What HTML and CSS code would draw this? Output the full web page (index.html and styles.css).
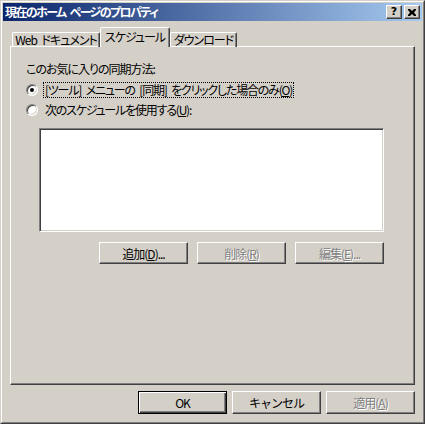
FILE: index.html
```html
<!DOCTYPE html>
<html lang="ja">
    <head>
        <meta charset="UTF-8" />
        <title>現在のホーム ページのプロパティ</title>
        <link rel="stylesheet" href="styles.css">
    </head>
    <body>
        <div class="window">
            <div class="frame">
                <div class="titlebar">
                    <span class="title">現在のホーム ページのプロパティ</span>
                    <div class="caption-buttons">
                        <button class="cap-btn help">?</button>
                        <button class="cap-btn close">
                            <svg width="8" height="7" viewBox="0 0 8 7">
                                <path d="M0 0h2l2 2 2-2h2v1l-2 2.5 2 2.5v1h-2l-2-2-2 2h-2v-1l2-2.5-2-2.5z" fill="#000"/>
                            </svg>
                        </button>
                    </div>
                </div>

                <div class="content">
                    <div class="tabs">
                        <div class="tab tab-web">Web ドキュメント</div>
                        <div class="tab tab-active">スケジュール</div>
                        <div class="tab tab-dl">ダウンロード</div>
                    </div>

                    <div class="panel">
                        <p class="label">このお気に入りの同期方法:</p>
                        <label class="radio-row">
                            <span class="radio checked"></span>
                            <span class="radio-text focus">[ツール] メニューの [同期] をクリックした場合のみ(<u>O</u>)</span>
                        </label>
                        <label class="radio-row">
                            <span class="radio"></span>
                            <span class="radio-text">次のスケジュールを使用する(<u>U</u>):</span>
                        </label>

                        <div class="schedule">
                            <div class="listbox"></div>
                            <div class="list-buttons">
                                <button class="button">追加(<u>D</u>)...</button>
                                <button class="button disabled">削除(<u>R</u>)</button>
                                <button class="button disabled">編集(<u>E</u>)...</button>
                            </div>
                        </div>
                    </div>

                    <div class="dialog-buttons">
                        <button class="button default">OK</button>
                        <button class="button">キャンセル</button>
                        <button class="button disabled">適用(<u>A</u>)</button>
                    </div>
                </div>
            </div>
        </div>
    </body>
</html>
```

FILE: styles.css
```css
body {
    margin: 0;
    background-color: #d4d0c8;
    font-family: "Noto Sans CJK JP", "DejaVu Sans", sans-serif;
    font-size: 12px;
    font-feature-settings: "palt";
    letter-spacing: -1px;
    word-spacing: 3px;
    color: #000;
}
.window {
    width: 425px;
    height: 424px;
    box-sizing: border-box;
    border: 1px solid;
    border-color: #d4d0c8 #404040 #404040 #d4d0c8;
}
.frame {
    height: 100%;
    box-sizing: border-box;
    border: 1px solid;
    border-color: #ffffff #808080 #808080 #ffffff;
    padding: 1px;
    display: flex;
    flex-direction: column;
}
.titlebar {
    height: 18px;
    display: flex;
    align-items: center;
    justify-content: space-between;
    padding: 0 2px 0 2px;
    background: linear-gradient(to right, #0a246a, #a6caf0);
}
.title {
    color: #ffffff;
    font-weight: bold;
    line-height: 18px;
    letter-spacing: -1.6px;
}
.caption-buttons {
    display: flex;
    gap: 2px;
}
.cap-btn {
    width: 16px;
    height: 14px;
    padding: 0;
    box-sizing: border-box;
    background-color: #d4d0c8;
    border: 1px solid;
    border-color: #ffffff #404040 #404040 #ffffff;
    box-shadow: inset -1px -1px 0 #808080;
    display: flex;
    align-items: center;
    justify-content: center;
    font-family: "DejaVu Sans", sans-serif;
    font-weight: bold;
    font-size: 11px;
    line-height: 12px;
    letter-spacing: 0;
}
.content {
    flex: 1;
    display: flex;
    flex-direction: column;
    padding: 7px 7px 7px 7px;
}
.tabs {
    display: flex;
    align-items: flex-end;
    height: 19px;
    padding-left: 2px;
    position: relative;
    z-index: 1;
    margin-bottom: -1px;
}
.tab {
    height: 15px;
    box-sizing: border-box;
    border: 1px solid;
    border-bottom: none;
    border-color: #ffffff #404040 transparent #ffffff;
    border-radius: 2px 2px 0 0;
    box-shadow: inset -1px 0 0 #808080;
    text-align: center;
    line-height: 14px;
    white-space: nowrap;
}
.tab-web {
    width: 88px;
}
.tab-active {
    width: 70px;
    height: 20px;
    background-color: #d4d0c8;
    line-height: 17px;
}
.tab-dl {
    width: 67px;
}
.panel {
    height: 339px;
    box-sizing: border-box;
    border: 1px solid;
    border-color: #ffffff #404040 #404040 #ffffff;
    box-shadow: inset -1px -1px 0 #808080;
    padding: 14px 15px 0 15px;
}
.label {
    margin: 0;
    line-height: 15px;
}
.radio-row {
    display: flex;
    align-items: center;
    height: 20px;
    gap: 5px;
}
.radio-row:first-of-type {
    margin-top: 4px;
}
.radio {
    width: 12px;
    height: 12px;
    box-sizing: border-box;
    border-radius: 50%;
    border: 1px solid;
    border-color: #808080 #ffffff #ffffff #808080;
    box-shadow: inset 1px 1px 0 #404040, inset -1px -1px 0 #d4d0c8;
    background-color: #ffffff;
    display: flex;
    align-items: center;
    justify-content: center;
}
.radio.checked::after {
    content: "";
    width: 4px;
    height: 4px;
    border-radius: 50%;
    background-color: #000;
}
.radio-text {
    line-height: 14px;
    padding: 0 1px;
    border: 1px dotted transparent;
    letter-spacing: -1.2px;
}
.radio-text.focus {
    border-color: #000;
}
.schedule {
    width: 345px;
    margin: 8px 0 0 13px;
}
.listbox {
    height: 104px;
    box-sizing: border-box;
    border: 1px solid;
    border-color: #808080 #ffffff #ffffff #808080;
    box-shadow: inset 1px 1px 0 #404040, inset -1px -1px 0 #d4d0c8;
    background-color: #ffffff;
}
.list-buttons {
    display: flex;
    justify-content: flex-end;
    gap: 9px;
    margin-top: 10px;
}
.button {
    width: 89px;
    height: 22px;
    padding: 0;
    box-sizing: border-box;
    background-color: #d4d0c8;
    border: 1px solid;
    border-color: #ffffff #404040 #404040 #ffffff;
    box-shadow: inset -1px -1px 0 #808080;
    font-family: inherit;
    font-size: 12px;
    letter-spacing: -1px;
    color: #000;
}
.button.disabled {
    color: #808080;
    text-shadow: 1px 1px 0 #ffffff;
}
.button.default {
    border-color: #000;
    box-shadow: inset 1px 1px 0 #ffffff, inset -1px -1px 0 #404040, inset -2px -2px 0 #808080;
}
.dialog-buttons {
    display: flex;
    justify-content: flex-end;
    gap: 5px;
    margin-top: 6px;
}
.dialog-buttons .button {
    height: 23px;
}
```
